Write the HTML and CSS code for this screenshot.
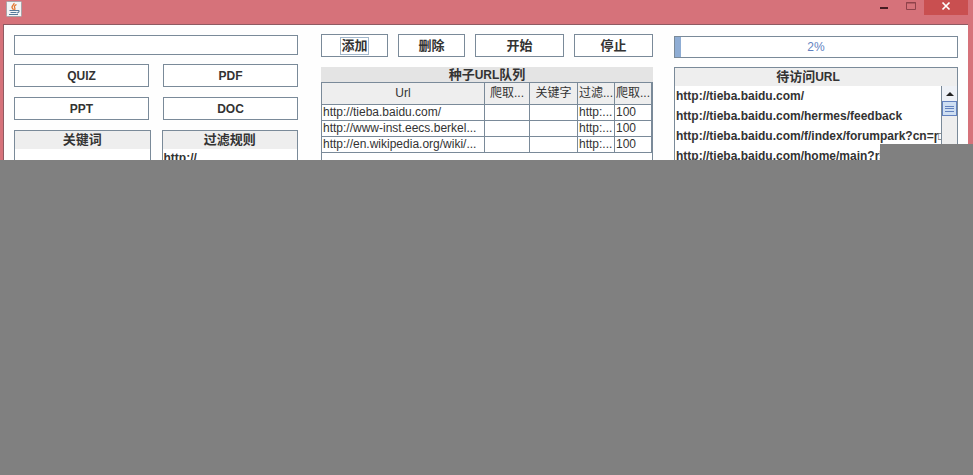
FILE: index.html
```
<!DOCTYPE html>
<html lang="zh-CN">

<head>
    <meta charset="UTF-8">
    <meta name="viewport" content="width=device-width, initial-scale=1.0">
    <title>Crawler</title>
    <link rel="stylesheet" href="styles.css">
</head>

<body>

    <div class="window">
        <header class="titlebar">
            <svg class="app-icon" width="16" height="16" viewBox="0 0 16 16">
                <rect x="0.5" y="0.5" width="15" height="15" rx="1" fill="#f3f5f6" stroke="#a9a3a8" />
                <path d="M8 2C8.500 4 5.500 4.500 6 6.500C6.200 7.500 7.500 7.600 7.200 9M10.500 3.500C8.500 4.500 8 5.500 8.700 6.700C9.200 7.700 9 8.300 8.500 9" fill="none" stroke="#e2762f" stroke-width="1.300" />
                <path d="M3.500 9.500H11M4.500 11.500H10.500M3 13.500H12M11 9.500C14 9 13.500 11.500 11 12" fill="none" stroke="#557b9b" stroke-width="1.100" />
            </svg>
            <div class="window-controls">
                <button class="control" aria-label="Minimize">
                    <svg width="10" height="12" viewBox="0 0 10 12"><path d="M1 8H9" stroke="#451c22" stroke-width="2" /></svg>
                </button>
                <button class="control" aria-label="Maximize">
                    <svg width="10" height="12" viewBox="0 0 10 12"><path d="M0.500 2.500H9.500V9.500H0.500ZM0 3H10" fill="none" stroke="#8f424b" /></svg>
                </button>
                <button class="control close" aria-label="Close">
                    <svg width="10" height="12" viewBox="0 0 10 12"><path d="M1.500 2.500L8.500 9.500M8.500 2.500L1.500 9.500" stroke="#fff" stroke-width="1.700" /></svg>
                </button>
            </div>
        </header>

        <main class="content">
            <section class="filters">
                <input class="keyword-input" type="text" aria-label="关键词">
                <div class="type-buttons">
                    <button class="btn">QUIZ</button>
                    <button class="btn">PDF</button>
                    <button class="btn">PPT</button>
                    <button class="btn">DOC</button>
                </div>
                <div class="filter-lists">
                    <div class="panel">
                        <h2 class="panel-title"><span class="zh">关键词</span></h2>
                    </div>
                    <div class="panel">
                        <h2 class="panel-title"><span class="zh">过滤规则</span></h2>
                        <ul class="rule-list">
                            <li>http://</li>
                        </ul>
                    </div>
                </div>
            </section>

            <section class="seeds">
                <div class="toolbar">
                    <button class="btn zh"><span class="focused">添加</span></button>
                    <button class="btn zh">删除</button>
                    <button class="btn zh">开始</button>
                    <button class="btn zh">停止</button>
                </div>
                <h2 class="seed-title"><span class="zh">种子</span>URL<span class="zh">队列</span></h2>
                <div class="table-box">
                    <table class="seed-table">
                        <colgroup>
                            <col class="col-url">
                            <col class="col-count">
                            <col class="col-key">
                            <col class="col-rule">
                            <col class="col-limit">
                        </colgroup>
                        <thead>
                            <tr>
                                <th>Url</th>
                                <th>爬取...</th>
                                <th>关键字</th>
                                <th>过滤...</th>
                                <th>爬取...</th>
                            </tr>
                        </thead>
                        <tbody>
                            <tr>
                                <td>http://tieba.baidu.com/</td>
                                <td></td>
                                <td></td>
                                <td>http:...</td>
                                <td>100</td>
                            </tr>
                            <tr>
                                <td>http://www-inst.eecs.berkel...</td>
                                <td></td>
                                <td></td>
                                <td>http:...</td>
                                <td>100</td>
                            </tr>
                            <tr>
                                <td>http://en.wikipedia.org/wiki/...</td>
                                <td></td>
                                <td></td>
                                <td>http:...</td>
                                <td>100</td>
                            </tr>
                        </tbody>
                    </table>
                </div>
            </section>

            <section class="queue">
                <div class="progress" role="progressbar" aria-label="进度" aria-valuenow="2" aria-valuemin="0" aria-valuemax="100">
                    <div class="progress-fill" style="width: 2%"></div>
                    <span class="progress-text">2%</span>
                </div>
                <div class="panel">
                    <h2 class="panel-title queue-title"><span class="zh">待访问</span>URL</h2>
                    <div class="queue-body">
                        <ul class="url-list">
                            <li>http://tieba.baidu.com/</li>
                            <li>http://tieba.baidu.com/hermes/feedback</li>
                            <li>http://tieba.baidu.com/f/index/forumpark?cn=ɼ□</li>
                            <li>http://tieba.baidu.com/home/main?r▒</li>
                        </ul>
                        <div class="scrollbar">
                            <button class="scroll-up" aria-label="Scroll up">
                                <svg width="8" height="4" viewBox="0 0 8 4"><path d="M4 0L8 4H0Z" fill="#222" /></svg>
                            </button>
                            <div class="scroll-thumb">
                                <svg width="9" height="6" viewBox="0 0 9 6"><path d="M0 0.500H9M0 2.500H9M0 5.500H9" stroke="#6382bf" /></svg>
                            </div>
                        </div>
                    </div>
                </div>
            </section>
        </main>

        <div class="cover"></div>
    </div>

</body>

</html>
```
FILE: styles.css
```
* {
    box-sizing: border-box;
}

body {
    margin: 0;
    background-color: #808080;
    color: #333;
    font-family: "Liberation Sans", Arial, "Noto Sans CJK SC", sans-serif;
    font-size: 12px;
    line-height: 16px;
}

h2,
ul {
    margin: 0;
    padding: 0;
    font-size: 12px;
    list-style: none;
}

button,
input {
    margin: 0;
    padding: 0;
    color: inherit;
    font: inherit;
}

/* only the top part of the window is visible */
.window {
    position: relative;
    display: flex;
    flex-direction: column;
    height: 160px;
    padding: 0 5px 0 3px;
    overflow: hidden;
    background-color: #d6727a;
}

.cover {
    position: absolute;
    right: 0;
    bottom: 0;
    width: 93px;
    height: 16px;
    background-color: #808080;
}

.titlebar {
    display: flex;
    flex: none;
    justify-content: space-between;
    align-items: flex-start;
    height: 24px;
    padding-left: 3px;
}

.app-icon {
    margin-top: 1px;
}

.window-controls {
    display: flex;
}

.control {
    display: flex;
    justify-content: center;
    width: 27px;
    height: 15px;
    border: 0;
    background: none;
}

.close {
    width: 44px;
    background-color: #c94f50;
}

.content {
    display: grid;
    flex: 1;
    grid-template-columns: 286fr 332fr 284fr;
    gap: 21px;
    padding: 9px 10px 0;
    border-top: 1px solid #8f5a62;
    border-left: 1px solid #8f5a62;
    background-color: #fefefe;
}

.filters,
.seeds,
.queue {
    min-width: 0;
}

.btn {
    height: 23px;
    border: 1px solid #7a8a99;
    background-color: #fff;
    font-weight: bold;
    line-height: 16px;
}

.zh {
    font-size: 13px;
}

.focused {
    display: inline-block;
    border: 1px solid #a3b8cc;
}

/* left column */
.filters {
    padding: 1px 2px 0 0;
}

.keyword-input {
    display: block;
    width: 100%;
    height: 20px;
    border: 1px solid #7a8a99;
    background-color: #fff;
}

.type-buttons {
    display: grid;
    grid-template-columns: 1fr 1fr;
    gap: 10px 14px;
    margin-top: 9px;
}

.filter-lists {
    display: grid;
    grid-template-columns: 1fr 1fr;
    gap: 11px;
    margin-top: 10px;
}

.panel {
    height: 200px;
    border: 1px solid #7a8a99;
    background-color: #fff;
}

.panel-title {
    height: 18px;
    background-color: #eee;
    line-height: 18px;
    text-align: center;
}

.rule-list {
    padding: 1px;
    font-weight: bold;
}

/* middle column */
.toolbar {
    display: grid;
    grid-template-columns: 67fr 67fr 89fr 79fr;
    gap: 10px;
}

.seed-title {
    height: 15px;
    margin-top: 10px;
    background-color: #e4e4e4;
    line-height: 15px;
    text-align: center;
}

.table-box {
    height: 200px;
    border: 1px solid #7a8a99;
    background-color: #fff;
}

.seed-table {
    width: 100%;
    border-collapse: separate;
    border-spacing: 0;
    table-layout: fixed;
}

.col-url {
    width: 163px;
}

.col-count {
    width: 45px;
}

.col-key {
    width: 48px;
}

.col-rule {
    width: 37px;
}

.seed-table th,
.seed-table td {
    height: 16px;
    padding: 0 1px;
    border-right: 1px solid #7a8a99;
    border-bottom: 1px solid #7a8a99;
    overflow: hidden;
    line-height: 15px;
    text-align: left;
    white-space: nowrap;
}

.seed-table th {
    height: 22px;
    background-color: #eee;
    font-weight: normal;
    text-align: center;
}

/* right column */
.progress {
    position: relative;
    height: 22px;
    margin-top: 2px;
    border: 1px solid #7a8a99;
    background-color: #fff;
    text-align: center;
}

.progress-fill {
    position: absolute;
    top: 0;
    left: 0;
    height: 100%;
    background-color: #8fadd4;
}

.progress-text {
    color: #6382bf;
    line-height: 20px;
}

.queue .panel {
    margin-top: 9px;
}

.queue-title {
    padding-right: 16px;
}

.queue-body {
    display: flex;
    height: 180px;
}

.url-list {
    flex: 1;
    min-width: 0;
    overflow: hidden;
    padding-left: 1px;
    font-weight: bold;
    line-height: 20px;
    white-space: nowrap;
}

.scrollbar {
    width: 16px;
    border-left: 1px solid #7a8a99;
    background-color: #eee;
}

.scroll-up,
.scroll-thumb {
    display: flex;
    justify-content: center;
    align-items: center;
    width: 100%;
    height: 15px;
    border: 0;
}

.scroll-up {
    background-color: #eef1f6;
}

.scroll-thumb {
    border: 1px solid #6382bf;
    background-color: #cfdff2;
}
```
